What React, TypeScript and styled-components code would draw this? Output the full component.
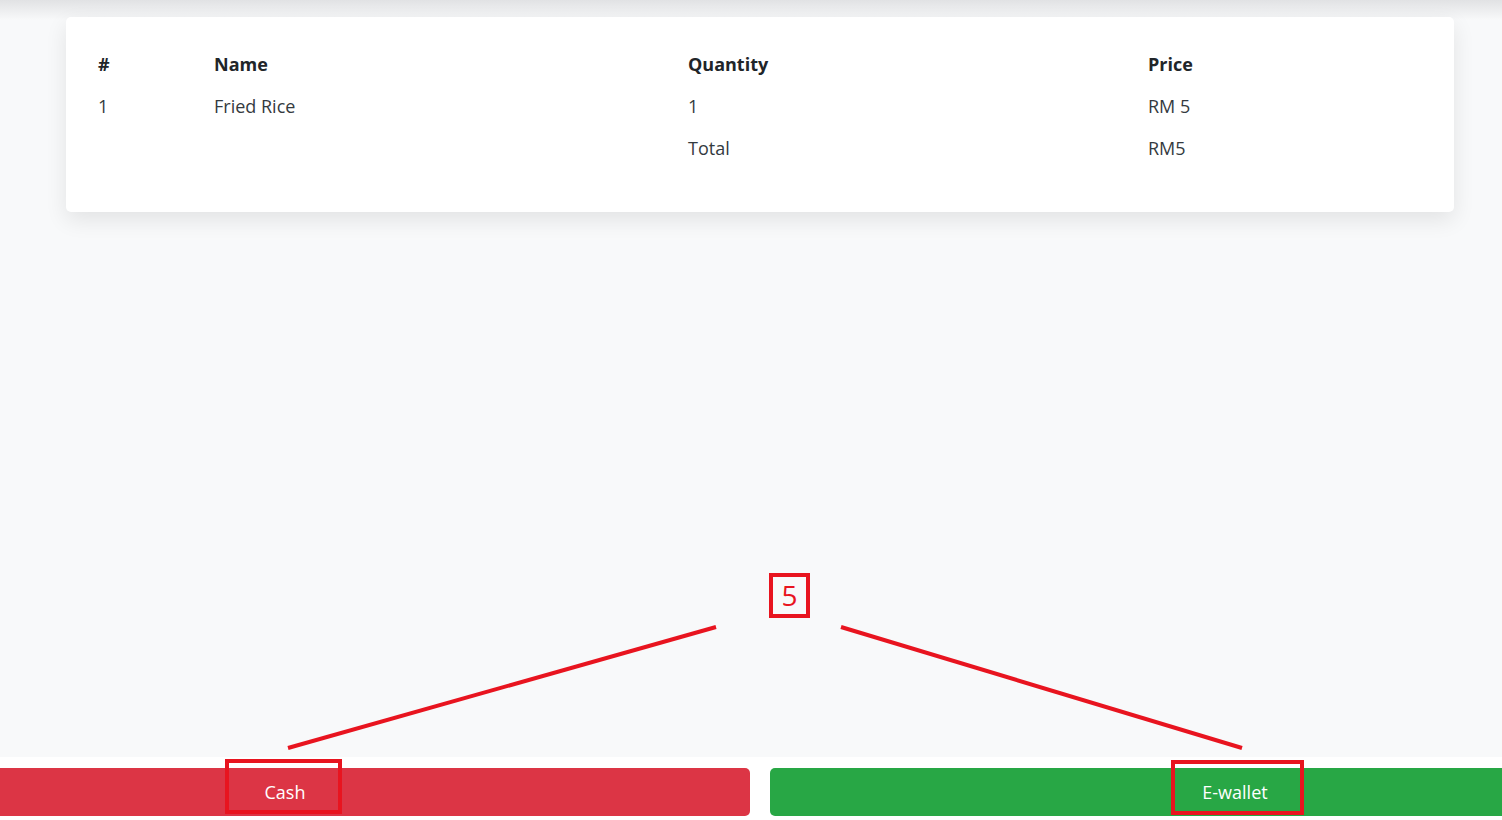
import styled, { createGlobalStyle } from 'styled-components';

const GlobalStyle = createGlobalStyle`
  html, body {
    margin: 0;
    padding: 0;
  }
  body {
    height: 820px;
    overflow: hidden;
    background: linear-gradient(#e1e2e4 0px, #f8f9fa 20px) #f8f9fa;
    font-family: 'Open Sans', 'Noto Sans', sans-serif;
    color: #212529;
  }
`;

const ITEMS = [{ id: 1, name: 'Fried Rice', quantity: 1, price: 'RM 5' }];

const App = () => {
  return (
    <Page>
      <GlobalStyle />
      <Main>
        <Card>
          <Table>
            <HeadCell>#</HeadCell>
            <HeadCell>Name</HeadCell>
            <HeadCell>Quantity</HeadCell>
            <HeadCell>Price</HeadCell>
            {ITEMS.map(({ id, name, quantity, price }) => (
              <Row key={id}>
                <Cell>{id}</Cell>
                <Cell>{name}</Cell>
                <Cell>{quantity}</Cell>
                <Cell>{price}</Cell>
              </Row>
            ))}
            <Cell />
            <Cell />
            <Cell>Total</Cell>
            <Cell>RM5</Cell>
          </Table>
        </Card>
      </Main>
      <BottomBar>
        <ButtonRow>
          <PayButton $color="#dc3545">Cash</PayButton>
          <PayButton $color="#28a745">E-wallet</PayButton>
        </ButtonRow>
      </BottomBar>
      <Annotations>
        <svg width="1502" height="820" viewBox="0 0 1502 820">
          <g stroke="#e8141f" fill="none">
            <line x1="288" y1="748" x2="716" y2="627" strokeWidth="4" />
            <line x1="841" y1="627" x2="1242" y2="748" strokeWidth="4" />
            <rect x="227" y="761" width="113" height="51" strokeWidth="4" />
            <rect x="1173" y="762" width="129" height="51" strokeWidth="4" />
          </g>
        </svg>
        <StepLabel>5</StepLabel>
      </Annotations>
    </Page>
  );
};

const Page = styled.div`
  position: relative;
  height: 820px;
  display: flex;
  flex-direction: column;
  justify-content: space-between;
`;

const Main = styled.div`
  padding: 17px 48px 0 66px;
`;

const Card = styled.div`
  background: #fff;
  border-radius: 5px;
  padding: 26px 24px 43px;
  box-shadow: 0 8px 22px rgba(0, 0, 0, 0.09);
`;

const Table = styled.div`
  display: grid;
  grid-template-columns: 116px 474px 460px 1fr;
  font-size: 18px;
  line-height: 26px;
`;

const Row = styled.div`
  display: contents;
`;

const HeadCell = styled.div`
  padding: 8px;
  font-weight: 700;
  color: #212529;
`;

const Cell = styled.div`
  padding: 8px;
  color: #343a40;
  min-height: 26px;
`;

const BottomBar = styled.div`
  background: #fff;
  padding: 11px 0 4px;
  overflow: hidden;
`;

const ButtonRow = styled.div`
  display: flex;
  gap: 20px;
  width: 1880px;
  margin-left: -180px;
`;

const PayButton = styled.button<{ $color: string }>`
  flex: 1;
  height: 48px;
  border: none;
  border-radius: 5px;
  background: ${p => p.$color};
  color: #fff;
  font-family: 'Open Sans', 'Noto Sans', sans-serif;
  font-size: 18px;
`;

const Annotations = styled.div`
  position: absolute;
  inset: 0;
  pointer-events: none;
`;

const StepLabel = styled.div`
  position: absolute;
  left: 769px;
  top: 573px;
  width: 33px;
  height: 37px;
  border: 4px solid #e8141f;
  color: #e8141f;
  font-family: 'Open Sans', sans-serif;
  font-size: 28px;
  line-height: 37px;
  text-align: center;
`;

export default App;
